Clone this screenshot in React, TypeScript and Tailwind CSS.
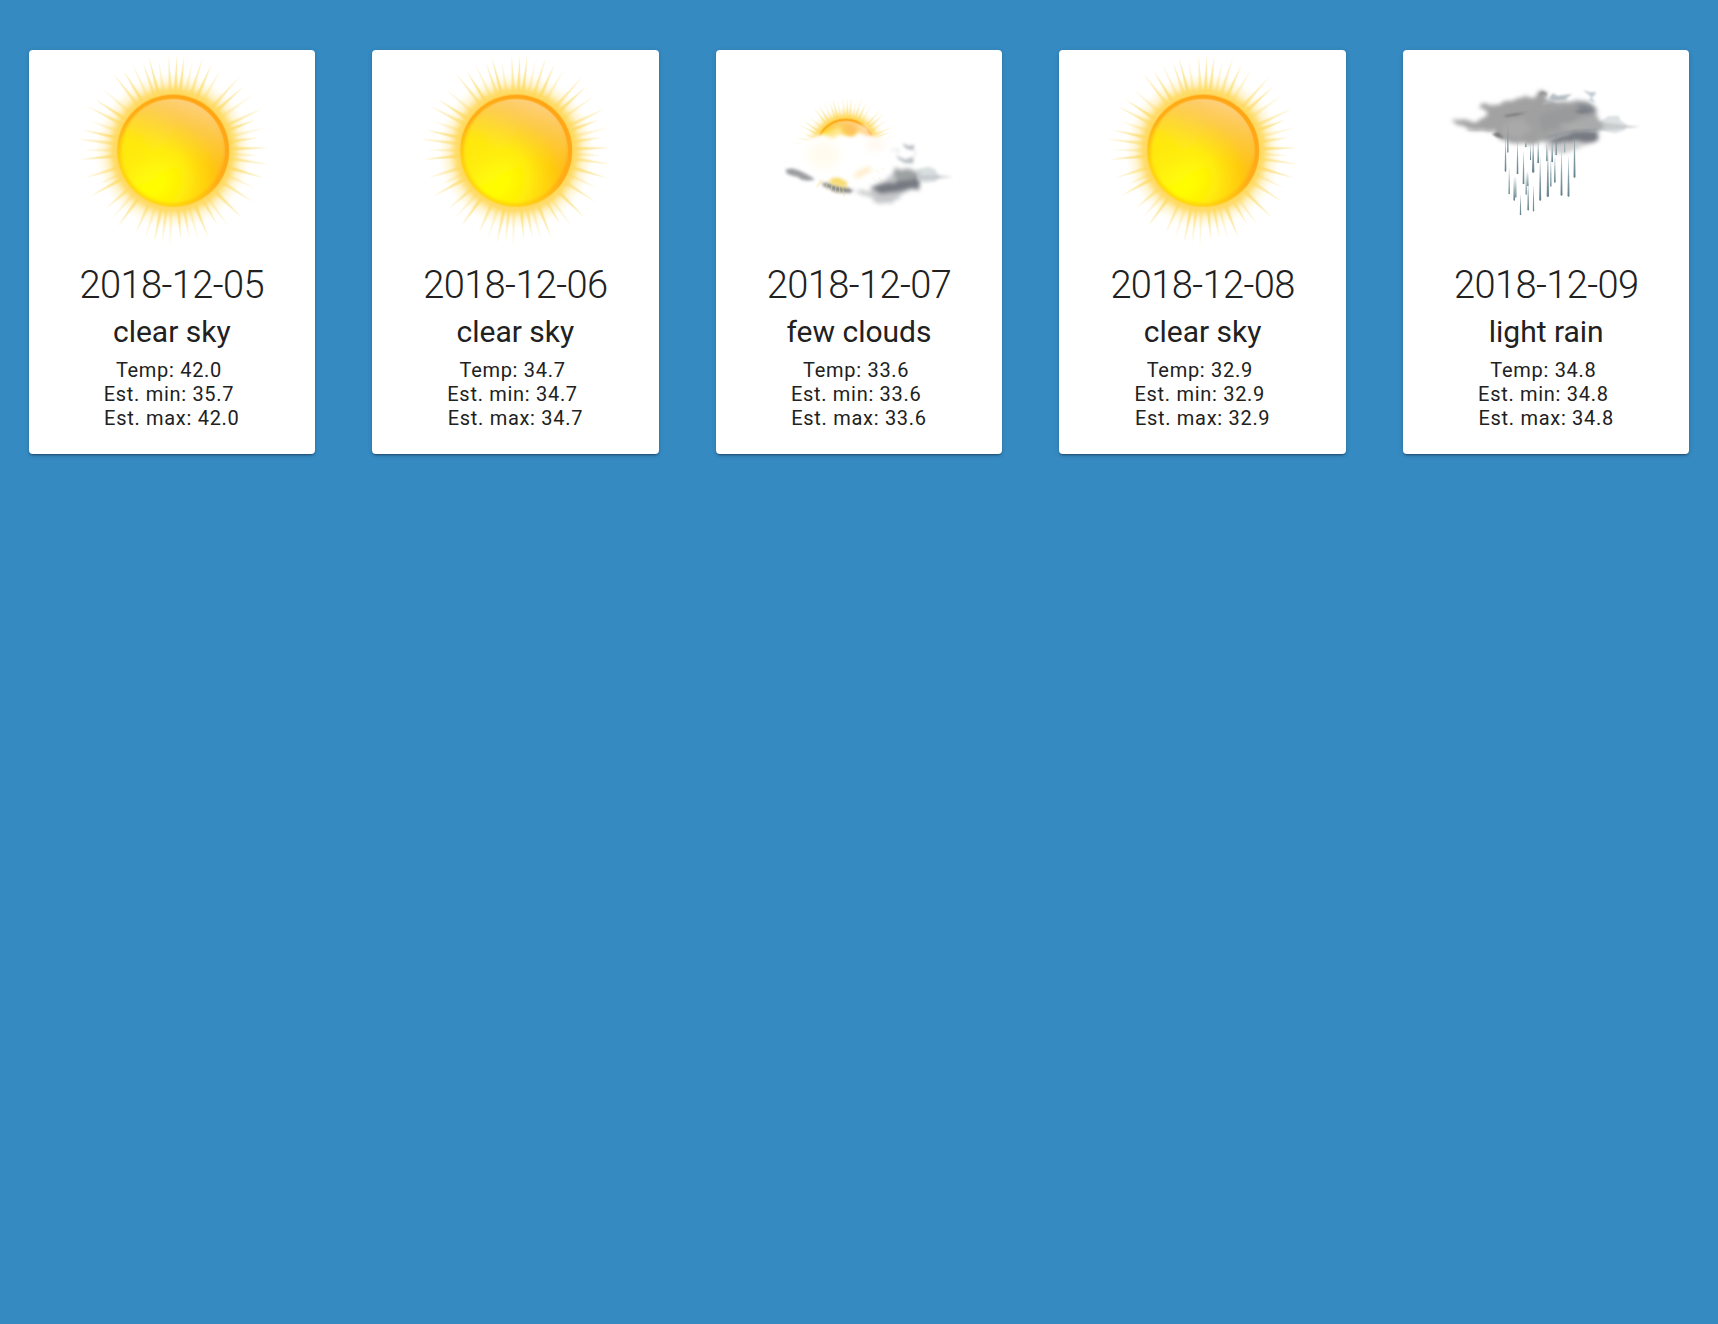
const RAYS: [number, number][] = [
  [493, 44], [518, 60], [549, 50], [575, 72], [604, 86], [660, 108], [671, 138], [698, 165],
  [727, 205], [705, 240], [738, 262], [715, 292], [743, 323], [715, 347], [747, 373], [731, 414], [703, 444],
  [698, 486], [665, 533], [626, 560], [592, 554], [565, 594], [534, 598], [508, 594], [482, 597],
  [449, 622], [426, 608], [401, 610], [374, 597], [346, 580], [292, 560], [277, 532], [256, 506],
  [212, 468], [236, 432], [196, 413], [180, 358], [189, 330], [170, 297], [188, 270], [210, 243],
  [200, 198], [225, 178], [248, 147], [276, 97], [309, 91], [333, 66], [367, 64], [386, 52],
  [414, 58], [445, 44], [470, 44],
];

const CX = 459;
const CY = 332;

function rayPath([x, y]: [number, number]) {
  const a = Math.atan2(y - CY, x - CX);
  const w = 0.033;
  const r = 175;
  return `M${CX + r * Math.cos(a - w)} ${CY + r * Math.sin(a - w)}L${x} ${y}L${CX + r * Math.cos(a + w)} ${CY + r * Math.sin(a + w)}Z`;
}

function SunShape() {
  return (
    <g>
      <defs>
        <radialGradient id="halo" gradientUnits="userSpaceOnUse" cx={CX} cy={CY} r="236">
          <stop offset="0.7" stopColor="#ffd650" />
          <stop offset="0.77" stopColor="#ffdb66" stopOpacity="0.9" />
          <stop offset="0.86" stopColor="#ffe58c" stopOpacity="0.42" />
          <stop offset="1" stopColor="#fff3c0" stopOpacity="0" />
        </radialGradient>
        <radialGradient id="ray" gradientUnits="userSpaceOnUse" cx={CX} cy={CY} r="285">
          <stop offset="0.6" stopColor="#ffd95a" stopOpacity="0.8" />
          <stop offset="0.8" stopColor="#fbe082" stopOpacity="0.75" />
          <stop offset="1" stopColor="#fbe79c" stopOpacity="0.75" />
        </radialGradient>
        <linearGradient id="rim" gradientUnits="userSpaceOnUse" x1="560" y1="200" x2="370" y2="480">
          <stop offset="0" stopColor="#ffa516" />
          <stop offset="0.5" stopColor="#ffac18" />
          <stop offset="0.85" stopColor="#ffcf12" />
          <stop offset="1" stopColor="#ffd710" />
        </linearGradient>
        <radialGradient id="disc" gradientUnits="userSpaceOnUse" cx="392" cy="418" r="255">
          <stop offset="0" stopColor="#ffff00" />
          <stop offset="0.15" stopColor="#fffd00" />
          <stop offset="0.4" stopColor="#ffed08" />
          <stop offset="0.6" stopColor="#ffd60c" />
          <stop offset="0.8" stopColor="#ffc013" />
          <stop offset="1" stopColor="#ffb81c" />
        </radialGradient>
        <radialGradient id="lemon" gradientUnits="userSpaceOnUse" cx="325" cy="305" r="160">
          <stop offset="0" stopColor="#ffea0a" stopOpacity="0.9" />
          <stop offset="1" stopColor="#fde232" stopOpacity="0" />
        </radialGradient>
        <linearGradient id="gloss" gradientUnits="userSpaceOnUse" x1="510" y1="178" x2="455" y2="345">
          <stop offset="0" stopColor="#ffd38c" stopOpacity="0.92" />
          <stop offset="0.45" stopColor="#fcd370" stopOpacity="0.55" />
          <stop offset="1" stopColor="#ffe050" stopOpacity="0" />
        </linearGradient>
        <filter id="soft2" x="-20%" y="-20%" width="140%" height="140%"><feGaussianBlur stdDeviation="2" /></filter>
        <filter id="soft5" x="-20%" y="-20%" width="140%" height="140%"><feGaussianBlur stdDeviation="4" /></filter>
      </defs>
      <circle cx={CX} cy={CY} r="236" fill="url(#halo)" />
      <g fill="url(#ray)" filter="url(#soft2)">
        {RAYS.map((p, i) => (
          <path key={i} d={rayPath(p)} opacity={[1, 0.5, 0.8][i % 3]} />
        ))}
      </g>
      <circle cx={CX} cy={CY} r="168" fill="url(#rim)" />
      <g filter="url(#soft5)">
        <ellipse cx="456" cy="334" rx="154" ry="156" fill="url(#disc)" />
        <ellipse cx="456" cy="334" rx="154" ry="156" fill="url(#lemon)" />
      </g>
      <circle cx={CX - 1} cy={CY + 1} r="156" fill="url(#gloss)" />
    </g>
  );
}

function ClearSkyIcon() {
  return (
    <svg viewBox="27 30 858 600" className="block h-[200px] w-full" role="img" aria-label="clear sky">
      <SunShape />
    </svg>
  );
}

function FewCloudsIcon() {
  return (
    <svg viewBox="-162 -120 858 600" className="block h-[200px] w-full" role="img" aria-label="few clouds">
      <defs>
        <filter id="c3" x="-40%" y="-60%" width="180%" height="220%"><feGaussianBlur stdDeviation="4.5" /></filter>
        <filter id="c6" x="-40%" y="-60%" width="180%" height="220%">
          <feTurbulence type="fractalNoise" baseFrequency="0.03" numOctaves="2" seed="4" result="n" />
          <feDisplacementMap in="SourceGraphic" in2="n" scale="16" xChannelSelector="R" yChannelSelector="G" />
          <feGaussianBlur stdDeviation="7" />
        </filter>
        <filter id="c9" x="-60%" y="-80%" width="220%" height="260%"><feGaussianBlur stdDeviation="14" /></filter>
      </defs>
      <g transform="translate(-21.5 -3) scale(0.54)">
        <SunShape />
      </g>
      {/* white cloud body */}
      <g fill="#fff">
        <path filter="url(#c6)" d="M90 160L122 150L152 132L178 137L200 120L218 135L245 140L272 122L300 137L350 140L395 180L380 250L330 290L270 305L130 268L85 225Z" />
        <path filter="url(#c3)" d="M95 155L150 138L180 138L220 142L300 140L350 170L330 245L240 266L215 266L190 264L120 268L85 260L80 180Z" />
        <path filter="url(#c6)" d="M240 260L340 220L390 250L335 300L240 310Z" />
        <path d="M70 260L140 268L145 294L180 310L300 330L280 350L60 350Z" />
      </g>
      <g filter="url(#c6)">
        <path d="M160 138L205 104L218 126L192 142Z" fill="#ffe47e" opacity="0.85" />
        <path d="M228 108L252 102L262 124L244 138L230 132Z" fill="#fdc060" opacity="0.85" />
        <path d="M258 104L290 106L306 130L282 122Z" fill="#ffe4bc" opacity="0.9" />
        <path d="M280 120L306 130L290 140Z" fill="#ffc9a0" opacity="0.5" />
        <path d="M248 258L278 235L305 232L290 252L262 262Z" fill="#ffe8ba" opacity="0.8" />
      </g>
      <g filter="url(#c9)">
        <ellipse cx="315" cy="165" rx="28" ry="9" fill="#ffe4c4" opacity="0.6" />
        <ellipse cx="160" cy="195" rx="50" ry="40" fill="#fff9de" opacity="0.5" />
      </g>
      {/* grey underside */}
      <g filter="url(#c3)">
        <path d="M46 238L66 235L88 242L106 251L126 262L134 269L112 272L94 269L82 261L66 257L50 251Z" fill="#8a8c8e" opacity="0.85" />
        <path d="M155 279L172 279L190 285L210 289L232 293L250 301L240 309L216 308L190 304L176 294L160 289Z" fill="#7b7e80" opacity="0.9" />
      </g>
      <g filter="url(#c6)">
        <path d="M248 298L295 306L320 285L350 265L390 240L445 250L448 292L422 300L396 314L388 326L360 340L325 338L300 326L272 314Z" fill="#b6b9bb" opacity="0.8" />
        <path d="M300 292L350 278L395 270L450 262L446 304L425 294L390 304L332 312Z" fill="#72757c" opacity="0.95" />
        <path d="M372 234L415 240L452 244L450 266L376 266Z" fill="#979a9b" opacity="0.85" />
      </g>
      <g filter="url(#c3)">
        <path d="M440 238L475 230L495 238L502 252L512 262L495 274L465 278L440 270Z" fill="#cbd1d4" opacity="0.75" />
        <path d="M440 258L500 255L548 261L500 267L440 270Z" fill="#bfc2c4" opacity="0.7" />
        <path d="M398 160L416 168L432 164L430 180L412 177L402 170Z" fill="#a8adb3" opacity="0.85" />
        <path d="M376 196L405 208L430 200L430 220L405 220L386 209Z" fill="#b6bbc0" opacity="0.9" />
        <path d="M432 178L436 192L428 205" fill="none" stroke="#e3e6e8" strokeWidth="4" />
        <path d="M362 181L385 178L382 192" fill="none" stroke="#e6e9eb" strokeWidth="5" />
      </g>
      {/* sun glimpsed below the cloud */}
      <g filter="url(#c3)">
        <path d="M174 272L190 263L210 264L232 277L224 291L192 284Z" fill="#f7d962" opacity="0.9" />
      </g>
      <g stroke="#f7e07a" strokeWidth="2.5" strokeLinecap="round" opacity="0.7">
        <path d="M151 270L140 290M174 276L168 288M188 278L183 298M199 280L196 306M208 280L209 310M217 280L221 319M227 278L229 296" />
        <path d="M318 240L328 248M326 262L332 270M308 264L318 273M335 236L342 240" opacity="0.5" />
      </g>
    </svg>
  );
}

/* x, top, bottom, stroke width */
const DROPS: [number, number, number, number][] = [
  [233, 160, 248, 4], [226, 205, 305, 5], [262, 215, 312, 5], [287, 214, 231, 4], [301, 225, 270, 3],
  [309, 210, 308, 7], [324, 214, 279, 5], [280, 245, 342, 5], [237, 295, 372, 4], [252, 322, 392, 5],
  [257, 322, 383, 4], [288, 310, 374, 4], [293, 305, 348, 4], [294, 340, 421, 5], [310, 348, 424, 4],
  [271, 375, 435, 4], [330, 262, 392, 6], [350, 220, 273, 4], [353, 238, 381, 7], [366, 215, 276, 5],
  [378, 185, 255, 4], [362, 270, 350, 4], [374, 262, 338, 5], [394, 243, 377, 6], [415, 262, 380, 6],
  [433, 188, 323, 6], [404, 200, 248, 2],
];

function LightRainIcon() {
  return (
    <svg viewBox="-81 -60 858 600" className="block h-[200px] w-full" role="img" aria-label="light rain">
      <defs>
        <filter id="r2" x="-40%" y="-60%" width="180%" height="220%"><feGaussianBlur stdDeviation="3" /></filter>
        <filter id="r5" x="-40%" y="-60%" width="180%" height="220%">
          <feTurbulence type="fractalNoise" baseFrequency="0.035" numOctaves="2" seed="7" result="n" />
          <feDisplacementMap in="SourceGraphic" in2="n" scale="13" xChannelSelector="R" yChannelSelector="G" />
          <feGaussianBlur stdDeviation="6.5" />
        </filter>
        <linearGradient id="drop" x1="0" y1="0" x2="0" y2="1">
          <stop offset="0" stopColor="#7c969e" stopOpacity="0.2" />
          <stop offset="0.5" stopColor="#7b959e" stopOpacity="0.9" />
          <stop offset="1" stopColor="#64828c" />
        </linearGradient>
        <linearGradient id="cloud" gradientUnits="userSpaceOnUse" x1="150" y1="80" x2="500" y2="230">
          <stop offset="0" stopColor="#a3a3a3" />
          <stop offset="0.5" stopColor="#a0a0a0" />
          <stop offset="1" stopColor="#a6a9ac" />
        </linearGradient>
      </defs>
      <g filter="url(#r5)">
        <path d="M345 215L430 205L480 220L450 232L420 246L375 250L350 235Z" fill="#cfcfd0" />
        <path d="M352 210L395 188L430 176L500 178L506 205L485 220L440 214L385 222Z" fill="#777a82" />
      </g>
      <g filter="url(#r2)">
        <path d="M500 160L535 138L565 137L572 152L590 164L585 180L555 190L520 184L500 174Z" fill="#dde1e3" />
        <path d="M490 155L530 158L575 164L630 170L560 178L480 184Z" fill="#c2c4c5" opacity="0.75" />
      </g>
      <g filter="url(#r5)">
        <path d="M64 150L95 147L140 155L164 144L172 124L148 114L152 103L205 105L243 90L285 80L314 84L328 60L352 66L348 90L380 96L440 90L480 95L498 114L500 140L522 170L500 182L430 190L370 206L325 222L240 220L208 204L192 182L112 176L80 163Z" fill="url(#cloud)" />
        <path d="M412 126L452 100L492 108L496 126L450 134L415 140Z" fill="#83888e" />
        <path d="M330 132L420 108L470 130L410 168L335 185Z" fill="#999a9b" />
        <path d="M380 165L500 145L502 168L430 184Z" fill="#ababab" />
        <path d="M210 165L270 145L310 175L270 205L222 198Z" fill="#a9a9a9" />
      </g>
      <g filter="url(#r2)">
        <path d="M185 192L205 186L222 205L200 202Z" fill="#7a7a7a" />
        <path d="M222 136L255 130L292 127L258 137L225 141Z" fill="#7d7d7d" />
        <path d="M112 180L160 179L205 184" fill="none" stroke="#a6a6a6" strokeWidth="3" />
        <path d="M328 74L338 68L349 74" fill="none" stroke="#929292" strokeWidth="7" />
        <path d="M354 86L368 70L382 77L426 72L410 84L380 92Z" fill="#b6bfc6" />
        <path d="M338 102L370 90L410 88" fill="none" stroke="#b2b9be" strokeWidth="5" />
        <path d="M458 60L477 66L497 66L495 74L484 84L497 98L477 92L482 80Z" fill="#c3ccd2" />
        <path d="M432 125L462 114L484 122L455 132Z" fill="#7d8188" />
        <path d="M350 202L390 192L440 182L500 180" fill="none" stroke="#8b9096" strokeWidth="4" />
      </g>
      {DROPS.map(([x, top, bottom, w], i) => (
        <path
          key={i}
          d={`M${x - 1} ${top}L${x + 1} ${top}L${x + w / 2} ${bottom - 2}L${x} ${bottom + 1}L${x - w / 2} ${bottom - 2}Z`}
          fill="url(#drop)"
        />
      ))}
    </svg>
  );
}

const ICONS = { "clear sky": ClearSkyIcon, "few clouds": FewCloudsIcon, "light rain": LightRainIcon };

interface Forecast {
  date: string;
  summary: keyof typeof ICONS;
  temp: string;
  min: string;
  max: string;
}

const FORECASTS: Forecast[] = [
  { date: "2018-12-05", summary: "clear sky", temp: "42.0", min: "35.7", max: "42.0" },
  { date: "2018-12-06", summary: "clear sky", temp: "34.7", min: "34.7", max: "34.7" },
  { date: "2018-12-07", summary: "few clouds", temp: "33.6", min: "33.6", max: "33.6" },
  { date: "2018-12-08", summary: "clear sky", temp: "32.9", min: "32.9", max: "32.9" },
  { date: "2018-12-09", summary: "light rain", temp: "34.8", min: "34.8", max: "34.8" },
];

function ForecastCard({ date, summary, temp, min, max }: Forecast) {
  const Icon = ICONS[summary];
  return (
    <article className="mx-[8.3333%] flex h-[404px] flex-col overflow-hidden rounded bg-white text-center text-[#212121] shadow-[0_2px_2px_rgba(0,0,0,0.14),0_3px_1px_-2px_rgba(0,0,0,0.2),0_1px_5px_rgba(0,0,0,0.12)]">
      <Icon />
      <h2 className="mt-3 text-[38px] leading-[46px] font-light tracking-[-0.6px]">{date}</h2>
      <h3 className="mt-1 text-[30px] leading-[40px] font-normal">{summary}</h3>
      <p className="mt-[6px] text-[20px] leading-6 tracking-[0.7px]">
        Temp: {temp}&nbsp;
        <br />
        Est. min: {min}&nbsp;
        <br />
        Est. max: {max}
      </p>
    </article>
  );
}

export default function App() {
  return (
    <main className="grid min-h-screen grid-cols-5 content-start bg-[#358ac1] pt-[50px] font-[Roboto,sans-serif]">
      {FORECASTS.map((f) => (
        <ForecastCard key={f.date} {...f} />
      ))}
    </main>
  );
}
